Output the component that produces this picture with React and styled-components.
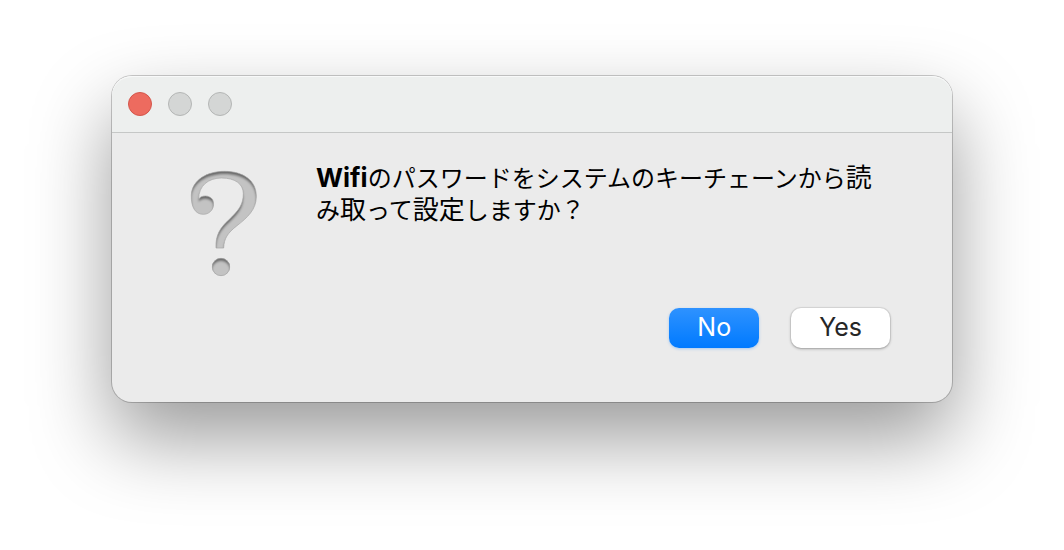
import { useState } from 'react'
import styled, { createGlobalStyle } from 'styled-components'

const GlobalStyle = createGlobalStyle`
  * {
    box-sizing: border-box;
  }

  body {
    background-color: #ffffff;
    font-family: Inter, 'Noto Sans CJK JP', sans-serif;
    margin: 0;
  }
`

const Desktop = styled.main`
  padding: 76px 112px 148px;
`

const Dialog = styled.section`
  background-color: #ebebeb;
  border-radius: 20px;
  box-shadow:
    0 0 0 1px rgba(0, 0, 0, 0.2),
    0 36px 80px rgba(0, 0, 0, 0.4);
`

const TitleBar = styled.header`
  align-items: center;
  background-color: #edefee;
  border-bottom: 1px solid #c5c7c6;
  border-radius: 20px 20px 0 0;
  box-shadow: inset 0 1px 0 #f8f9f9;
  display: flex;
  gap: 16px;
  height: 57px;
  padding: 0 16px;
`

const WindowButton = styled.button`
  background-color: ${props => (props.$close ? '#ed6b5f' : '#d4d6d5')};
  border: 1px solid ${props => (props.$close ? '#d4564b' : '#b4b6b5')};
  border-radius: 50%;
  height: 24px;
  padding: 0;
  width: 24px;
`

const Content = styled.div`
  display: flex;
  gap: 58px;
  padding: 30px 62px 30px 78px;
`

const Icon = styled.svg`
  display: block;
  flex: none;
  height: 108px;
  margin-top: 7px;
  width: 68px;
`

const Message = styled.p`
  color: #000000;
  flex: 1;
  font-size: 24px;
  line-height: 32px;
  margin: 0;
`

const NetworkName = styled.strong`
  font-size: 26px;
  font-weight: 700;
  line-height: 1;
`

const Kanji = styled.span`
  font-size: 26px;
  line-height: 1;
`

const Actions = styled.footer`
  display: flex;
  gap: 32px;
  justify-content: flex-end;
  padding: 0 62px 54px;
`

const ActionButton = styled.button`
  background: ${props => (props.$primary ? 'linear-gradient(#2e92ff, #007aff)' : '#ffffff')};
  border: 0;
  border-radius: 10px;
  box-shadow: ${props => (props.$primary
    ? '0 1px 3px rgba(0, 122, 255, 0.3)'
    : '0 0 0 1px rgba(0, 0, 0, 0.06), 0 1px 3px rgba(0, 0, 0, 0.3)')};
  color: ${props => (props.$primary ? '#ffffff' : '#262626')};
  font-family: inherit;
  font-size: 25px;
  height: 40px;
  line-height: 38px;
  padding: 0 28px 2px;
`

const MARK = 'M64 120 C66 76 110 49 163 49 C222 49 259 78 259 124 C259 164 232 188 201 212 C173 234 162 250 161 279 L138 279 C136 240 151 218 176 195 C207 165 220 148 220 116 C220 86 194 69 155 69 C115 69 86 92 86 132 C94 120 118 119 128 134 C137 155 123 178 100 178 C76 178 63 157 64 120 Z'

const QuestionIcon = () => (
  <Icon viewBox="60 45 204 324" aria-hidden="true">
    <defs>
      <filter id="engrave" x="-10%" y="-10%" width="120%" height="120%">
        <feComponentTransfer in="SourceAlpha" result="outside">
          <feFuncA type="linear" slope="-1" intercept="1" />
        </feComponentTransfer>
        <feOffset in="outside" dy="10" result="shifted" />
        <feGaussianBlur in="shifted" stdDeviation="3" result="soft" />
        <feFlood floodColor="#4c4c4c" floodOpacity="0.85" />
        <feComposite in2="soft" operator="in" />
        <feComposite in2="SourceAlpha" operator="in" result="shade" />
        <feMerge>
          <feMergeNode in="SourceGraphic" />
          <feMergeNode in="shade" />
        </feMerge>
      </filter>
    </defs>
    <g fill="#c3c3c3" filter="url(#engrave)">
      <path d={MARK} />
      <circle cx="153" cy="336" r="27" />
    </g>
    <g fill="none" stroke="#a6a6a6" strokeOpacity="0.7" strokeWidth="3">
      <path d={MARK} />
      <circle cx="153" cy="336" r="26" />
    </g>
  </Icon>
)

const App = () => {
  const [open, setOpen] = useState(true)
  const close = () => setOpen(false)

  return (
    <>
      <GlobalStyle />
      <Desktop>
        {open && (
          <Dialog role="alertdialog" aria-describedby="message">
            <TitleBar>
              <WindowButton $close type="button" aria-label="Close" onClick={close} />
              <WindowButton type="button" aria-label="Minimize" disabled />
              <WindowButton type="button" aria-label="Zoom" disabled />
            </TitleBar>
            <Content>
              <QuestionIcon />
              <Message id="message" lang="ja">
                <NetworkName>Wifi</NetworkName>
                のパスワードをシステムのキーチェーンから<Kanji>読</Kanji>み<Kanji>取</Kanji>って<Kanji>設定</Kanji>しますか？
              </Message>
            </Content>
            <Actions>
              <ActionButton $primary type="button" onClick={close}>No</ActionButton>
              <ActionButton type="button" onClick={close}>Yes</ActionButton>
            </Actions>
          </Dialog>
        )}
      </Desktop>
    </>
  )
}

export default App
